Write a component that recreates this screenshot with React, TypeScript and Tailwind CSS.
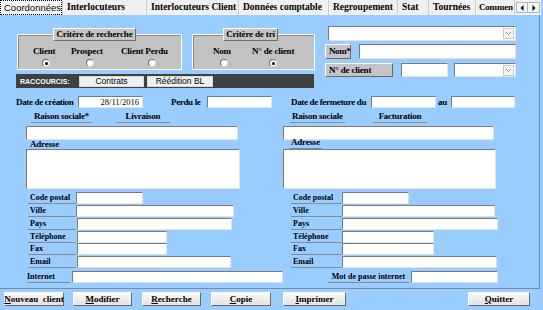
import React from "react";

const serif = "font-['Liberation_Serif','Times_New_Roman',serif]";
const sans = "font-['Liberation_Sans',Arial,sans-serif]";

function Field({ className = "", children }: { className?: string; children?: React.ReactNode }) {
  return (
    <div
      className={`bg-white border border-t-[#7a7a7a] border-l-[#7a7a7a] border-r-[#e2e2e2] border-b-[#e2e2e2] ${className}`}
    >
      {children}
    </div>
  );
}

function Combo({ className = "" }: { className?: string }) {
  return (
    <Field className={`flex items-center justify-end pr-[1px] ${className}`}>
      <div className="w-[11px] h-[11px] bg-[#f4f4f4] border border-[#c9c9c9] flex items-center justify-center">
        <svg width="7" height="5" viewBox="0 0 7 5">
          <path d="M1 1l2.5 2.5L6 1" fill="none" stroke="#8a8a8a" strokeWidth="1" />
        </svg>
      </div>
    </Field>
  );
}

function ULabel({ className = "", children }: { className?: string; children: React.ReactNode }) {
  return (
    <div
      className={`flex items-end whitespace-nowrap leading-none border-b border-[#8a8a8a] pb-[1px] font-bold ${className}`}
    >
      {children}
    </div>
  );
}

function Radio({ checked, className = "" }: { checked?: boolean; className?: string }) {
  return (
    <div
      className={`w-[8px] h-[8px] rounded-full bg-white border border-t-[#6a6a6a] border-l-[#6a6a6a] border-r-[#d8d8d8] border-b-[#d8d8d8] flex items-center justify-center ${className}`}
    >
      {checked && <div className="w-[3px] h-[3px] rounded-full bg-black"></div>}
    </div>
  );
}

function GroupTitle({ className = "", children }: { className?: string; children: React.ReactNode }) {
  return (
    <div
      className={`-mt-[7px] h-[13px] bg-[#c4c4c4] border border-t-white border-l-white border-r-[#6e6e6e] border-b-[#6e6e6e] flex items-center justify-center text-[9px] font-bold leading-none whitespace-nowrap tracking-[-0.15px] ${className}`}
    >
      {children}
    </div>
  );
}

function BottomButton({ className = "", first, rest }: { className?: string; first: string; rest: string }) {
  return (
    <div
      className={`h-[14px] bg-gradient-to-b from-[#fafafa] to-[#e2e2e2] border border-t-white border-l-white border-r-[#6a6a6a] border-b-[#6a6a6a] flex items-center justify-center text-[9px] font-bold leading-none whitespace-pre ${className}`}
    >
      <span className="underline">{first}</span>
      {rest}
    </div>
  );
}

const tabs = [
  { label: "Interlocuteurs", w: "w-[84px]" },
  { label: "Interlocuteurs Client", w: "w-[92px]" },
  { label: "Données comptable", w: "w-[90px]" },
  { label: "Regroupement", w: "w-[69px]" },
  { label: "Stat", w: "w-[31px]" },
  { label: "Tournées", w: "w-[47px]" },
];

export default function App() {
  return (
    <div className={`w-[543px] h-[310px] bg-[#99ccff] flex flex-col overflow-hidden text-black ${serif}`}>
      {/* tabs */}
      <div className="h-[15px] w-[541px] flex bg-[#f0f0f0] shrink-0">
        <div className="w-[63px] bg-[#fafafa] border-r border-[#cfcfcf]">
          <div className={`h-full border border-dotted border-black flex items-center pl-[3px] text-[9.5px] leading-none ${sans}`}>
            Coordonnées
          </div>
        </div>
        {tabs.map((t) => (
          <div
            key={t.label}
            className={`${t.w} border-r border-[#cfcfcf] flex items-center pl-[4px] text-[9.5px] font-bold leading-none whitespace-nowrap overflow-hidden`}
          >
            {t.label}
          </div>
        ))}
        <div className="w-[39px] border-r border-[#cfcfcf] flex items-center pl-[3px] text-[9px] font-bold leading-none whitespace-nowrap tracking-[-0.2px]">
          Commen
        </div>
        <div className="flex items-center pl-[1px]">
          <div className="w-[12px] h-[11px] bg-[#f4f4f4] border border-[#b4b4b4] flex items-center justify-center">
            <svg width="4" height="6" viewBox="0 0 4 6">
              <path d="M3.5 0L0.5 3l3 3z" fill="#000" />
            </svg>
          </div>
          <div className="w-[12px] h-[11px] bg-[#f4f4f4] border border-[#b4b4b4] border-l-0 flex items-center justify-center">
            <svg width="4" height="6" viewBox="0 0 4 6">
              <path d="M0.5 0l3 3-3 3z" fill="#000" />
            </svg>
          </div>
        </div>
      </div>

      {/* panel */}
      <div className="w-[540px] h-[274px] shrink-0 border-r border-b border-[#7d8a96] flex flex-col">
        {/* top section */}
        <div className="h-[74px] flex shrink-0">
          <div className="ml-[16px] flex flex-col">
            <div className="mt-[19px] ml-[1px] flex">
              <div className="w-[165px] h-[36px] bg-[#c2c2c2] border border-white shadow-[inset_1px_1px_0_#8a8a8a] flex flex-col">
                <GroupTitle className="ml-[35px] w-[83px]">Critère de recherche</GroupTitle>
                <div className="mt-[5px] h-[10px] flex items-center text-[9px] font-bold leading-none whitespace-nowrap tracking-[-0.2px]">
                  <div className="ml-[15px] w-[24px]">Client</div>
                  <div className="ml-[14px] w-[33px]">Prospect</div>
                  <div className="ml-[17px] w-[48px]">Client Perdu</div>
                </div>
                <div className="mt-[3px] flex">
                  <Radio checked className="ml-[24px]" />
                  <Radio className="ml-[36px]" />
                  <Radio className="ml-[54px]" />
                </div>
              </div>
              <div className="ml-[10px] w-[123px] h-[36px] bg-[#c2c2c2] border border-white shadow-[inset_1px_1px_0_#8a8a8a] flex flex-col">
                <GroupTitle className="ml-[30px] w-[55px]">Critère de tri</GroupTitle>
                <div className="mt-[5px] h-[10px] flex items-center text-[9px] font-bold leading-none whitespace-nowrap tracking-[-0.2px]">
                  <div className="ml-[20px] w-[19px]">Nom</div>
                  <div className="ml-[20px] w-[45px]">N° de client</div>
                </div>
                <div className="mt-[3px] flex">
                  <Radio className="ml-[27px]" />
                  <Radio checked className="ml-[41px]" />
                </div>
              </div>
            </div>
            <div className={`mt-[4px] w-[298px] h-[14px] bg-[#404040] flex items-center ${sans}`}>
              <div className="ml-[4px] w-[59px] text-[7px] font-bold text-white leading-none whitespace-nowrap">
                RACCOURCIS:
              </div>
              <div className="w-[65px] h-[11px] bg-[#f0f0f0] border border-[#d8d8d8] flex items-center justify-center text-[8.5px] leading-none">
                Contrats
              </div>
              <div className="ml-[3px] w-[66px] h-[11px] bg-[#f0f0f0] border border-[#d8d8d8] flex items-center justify-center text-[8.5px] leading-none">
                Réédition BL
              </div>
            </div>
          </div>

          <div className="ml-[10px] flex flex-col">
            <Combo className="mt-[11px] ml-[3px] w-[188px] h-[15px]" />
            <div className="mt-[3px] flex h-[15px]">
              <div className="w-[26px] h-[15px] bg-[#c4c4c4] border border-t-white border-l-white border-r-[#6a6a6a] border-b-[#6a6a6a] flex items-center pl-[3px] text-[9px] font-bold leading-none whitespace-nowrap tracking-[-0.4px]">
                Nom*
              </div>
              <Field className="ml-[8px] w-[157px] h-[15px]" />
            </div>
            <div className="mt-[4px] flex h-[14px]">
              <div className="w-[68px] h-[14px] bg-[#c4c4c4] border border-t-white border-l-white border-r-[#6a6a6a] border-b-[#6a6a6a] flex items-center pl-[3px] text-[9px] font-bold leading-none whitespace-nowrap tracking-[-0.2px]">
                N° de client
              </div>
              <Field className="ml-[8px] w-[47px] h-[14px]" />
              <Combo className="ml-[6px] w-[62px] h-[14px]" />
            </div>
          </div>
        </div>

        {/* dates */}
        <div className="mt-[7px] h-[12px] flex items-center text-[9px] font-bold leading-none whitespace-nowrap tracking-[-0.35px] shrink-0">
          <div className="ml-[16px] w-[59px]">Date de création</div>
          <Field className="ml-[3px] w-[65px] h-[12px] flex items-center justify-end pr-[3px] font-normal text-[8.5px] tracking-normal">
            28/11/2016
          </Field>
          <div className="ml-[28px] w-[30px]">Perdu le</div>
          <Field className="ml-[6px] w-[65px] h-[12px]" />
          <div className="ml-[19px] w-[75px]">Date de fermeture du</div>
          <Field className="ml-[5px] w-[65px] h-[12px]" />
          <div className="ml-[2px] w-[11px]">au</div>
          <Field className="ml-[2px] w-[64px] h-[12px]" />
        </div>

        {/* body columns */}
        <div className="mt-[2px] flex">
          {/* left */}
          <div className="w-[283px] flex flex-col">
            <div className="h-[13px] flex text-[9px] tracking-[-0.25px]">
              <ULabel className="ml-[31px] w-[61px] justify-center">Raison sociale*</ULabel>
              <ULabel className="ml-[24px] w-[54px] justify-center">Livraison</ULabel>
            </div>
            <Field className="mt-[3px] ml-[26px] w-[212px] h-[14px]" />
            <div className="h-[9px] ml-[30px] flex items-end text-[9px] font-bold leading-none tracking-[-0.2px]">Adresse</div>
            <Field className="ml-[26px] w-[214px] h-[40px] border-t-[#5e5e5e] border-l-[#5e5e5e]" />
            <div className="mt-[3px] flex flex-col text-[8px]">
              <div className="h-[13px] flex">
                <ULabel className="ml-[28px] w-[48px] h-[12px] pl-[2px]">Code postal</ULabel>
                <Field className="w-[67px] h-[12px]" />
              </div>
              <div className="h-[13px] flex">
                <ULabel className="ml-[28px] w-[48px] h-[12px] pl-[2px]">Ville</ULabel>
                <Field className="w-[158px] h-[12px]" />
              </div>
              <div className="h-[13px] flex">
                <ULabel className="ml-[28px] w-[48px] h-[12px] pl-[2px]">Pays</ULabel>
                <Field className="ml-[1px] w-[155px] h-[12px]" />
              </div>
              <div className="h-[12px] flex">
                <ULabel className="ml-[28px] w-[48px] h-[12px] pl-[2px]">Téléphone</ULabel>
                <Field className="ml-[1px] w-[90px] h-[12px]" />
              </div>
              <div className="h-[13px] flex">
                <ULabel className="ml-[28px] w-[48px] h-[12px] pl-[2px]">Fax</ULabel>
                <Field className="ml-[1px] w-[90px] h-[12px]" />
              </div>
              <div className="h-[12px] flex">
                <ULabel className="ml-[28px] w-[48px] h-[12px] pl-[2px]">Email</ULabel>
                <Field className="ml-[1px] w-[154px] h-[12px]" />
              </div>
              <div className="mt-[3px] h-[12px] flex">
                <ULabel className="ml-[27px] w-[43px] h-[12px]">Internet</ULabel>
                <Field className="ml-[2px] w-[211px] h-[12px]" />
              </div>
            </div>
          </div>

          {/* right */}
          <div className="w-[256px] flex flex-col">
            <div className="h-[13px] flex text-[9px] tracking-[-0.25px]">
              <ULabel className="ml-[7px] w-[55px] justify-center">Raison sociale</ULabel>
              <ULabel className="ml-[28px] w-[54px] justify-center">Facturation</ULabel>
            </div>
            <Field className="mt-[3px] w-[211px] h-[14px]" />
            <ULabel className="ml-[7px] w-[32px] h-[9px] pl-[1px] text-[9px] tracking-[-0.2px]">Adresse</ULabel>
            <Field className="w-[213px] h-[40px] border-t-[#5e5e5e] border-l-[#5e5e5e]" />
            <div className="mt-[3px] flex flex-col text-[8px]">
              <div className="h-[13px] flex">
                <ULabel className="ml-[8px] w-[51px] h-[12px] pl-[2px]">Code postal</ULabel>
                <Field className="w-[67px] h-[12px]" />
              </div>
              <div className="h-[13px] flex">
                <ULabel className="ml-[8px] w-[51px] h-[12px] pl-[2px]">Ville</ULabel>
                <Field className="w-[153px] h-[12px]" />
              </div>
              <div className="h-[13px] flex">
                <ULabel className="ml-[8px] w-[51px] h-[12px] pl-[2px]">Pays</ULabel>
                <Field className="w-[156px] h-[12px]" />
              </div>
              <div className="h-[12px] flex">
                <ULabel className="ml-[8px] w-[51px] h-[12px] pl-[2px]">Téléphone</ULabel>
                <Field className="w-[92px] h-[12px]" />
              </div>
              <div className="h-[13px] flex">
                <ULabel className="ml-[8px] w-[51px] h-[12px] pl-[2px]">Fax</ULabel>
                <Field className="w-[92px] h-[12px]" />
              </div>
              <div className="h-[12px] flex">
                <ULabel className="ml-[8px] w-[51px] h-[12px] pl-[2px]">Email</ULabel>
                <Field className="w-[155px] h-[12px]" />
              </div>
              <div className="mt-[3px] h-[12px] flex">
                <ULabel className="ml-[45px] w-[81px] h-[12px] justify-center">Mot de passe internet</ULabel>
                <Field className="ml-[2px] w-[87px] h-[12px]" />
              </div>
            </div>
          </div>
        </div>
      </div>

      {/* bottom buttons */}
      <div className="mt-[3px] flex shrink-0">
        <BottomButton className="ml-[4px] w-[60px]" first="N" rest="ouveau  client" />
        <BottomButton className="ml-[9px] w-[59px]" first="M" rest="odifier" />
        <BottomButton className="ml-[10px] w-[59px]" first="R" rest="echerche" />
        <BottomButton className="ml-[10px] w-[60px]" first="C" rest="opie" />
        <BottomButton className="ml-[12px] w-[63px]" first="I" rest="mprimer" />
        <BottomButton className="ml-[122px] w-[62px]" first="Q" rest="uitter" />
      </div>
    </div>
  );
}
